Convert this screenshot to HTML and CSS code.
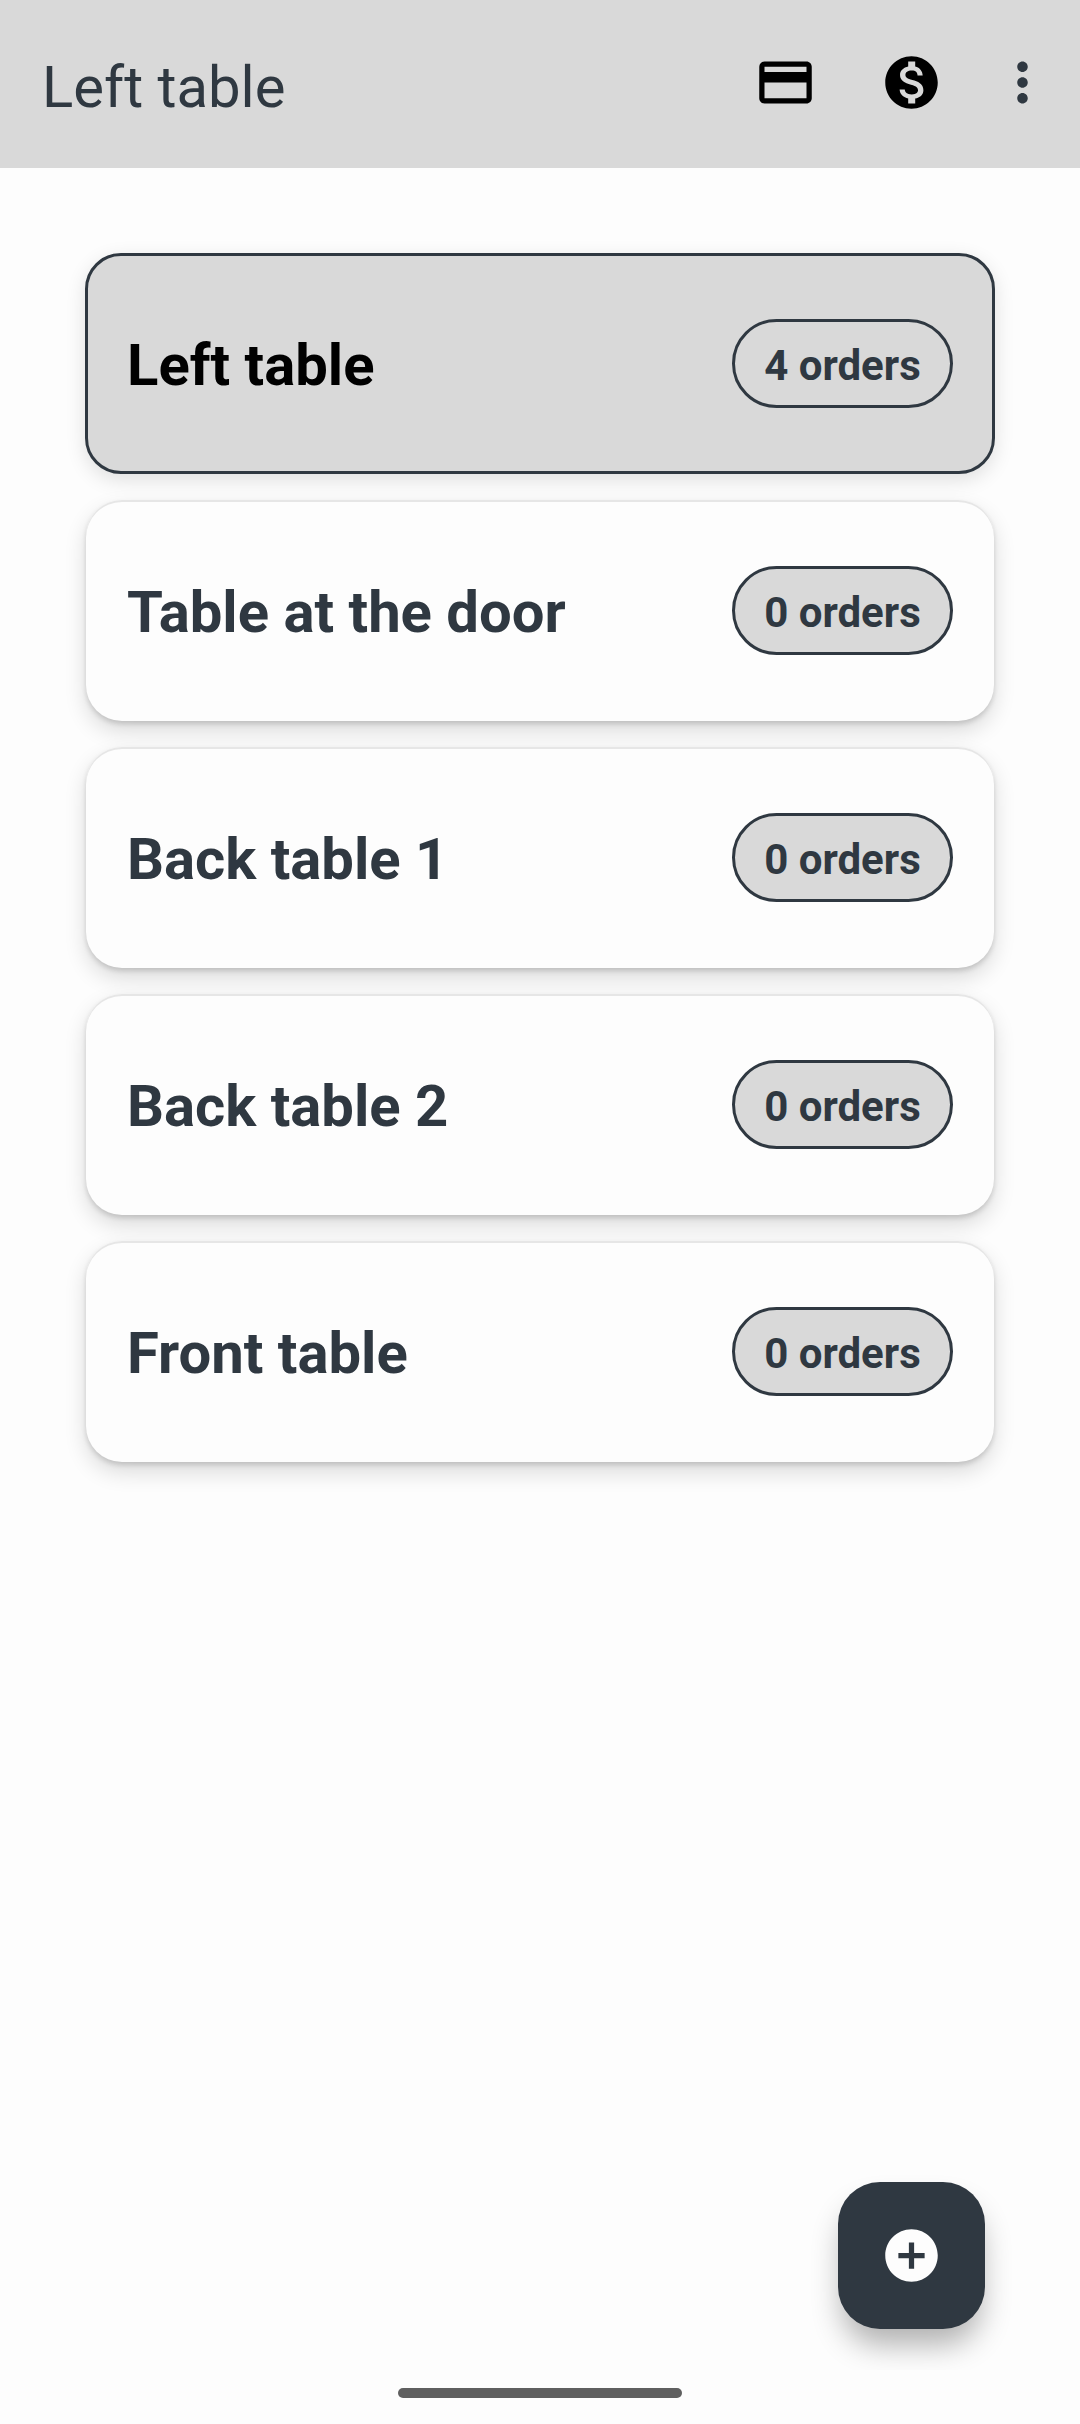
FILE: index.html
```html
<!DOCTYPE html>
<html lang="en">

<head>
    <meta charset="UTF-8">
    <meta name="viewport" content="width=device-width, initial-scale=1.0">
    <title>Left table</title>
    <link rel="stylesheet" href="styles.css">
</head>

<body>
    <header class="app-bar">
        <h1 class="app-title">Left table</h1>
        <div class="app-actions">
            <svg class="icon icon-black" viewBox="0 0 24 24"><path d="M20 4H4c-1.11 0-1.99.89-1.99 2L2 18c0 1.11.89 2 2 2h16c1.11 0 2-.89 2-2V6c0-1.11-.89-2-2-2zm0 14H4v-6h16v6zm0-10H4V6h16v2z"/></svg>
            <svg class="icon icon-black" viewBox="0 0 24 24"><path d="M12 2C6.48 2 2 6.48 2 12s4.48 10 10 10 10-4.48 10-10S17.52 2 12 2zm1.41 16.09V20h-2.67v-1.93c-1.71-.36-3.16-1.46-3.27-3.4h1.96c.1 1.05.82 1.87 2.65 1.87 1.96 0 2.4-.98 2.4-1.59 0-.83-.44-1.61-2.67-2.14-2.48-.6-4.18-1.62-4.18-3.67 0-1.72 1.39-2.84 3.11-3.21V4h2.67v1.95c1.86.45 2.79 1.86 2.85 3.39H14.3c-.05-1.11-.64-1.87-2.22-1.87-1.5 0-2.4.68-2.4 1.64 0 .84.65 1.39 2.67 1.91s4.18 1.39 4.18 3.91c-.01 1.83-1.38 2.83-3.12 3.16z"/></svg>
            <svg class="icon icon-slate" viewBox="0 0 24 24"><path d="M12 8c1.1 0 2-.9 2-2s-.9-2-2-2-2 .9-2 2 .9 2 2 2zm0 2c-1.1 0-2 .9-2 2s.9 2 2 2 2-.9 2-2-.9-2-2-2zm0 6c-1.1 0-2 .9-2 2s.9 2 2 2 2-.9 2-2-.9-2-2-2z"/></svg>
        </div>
    </header>

    <main class="content">
        <ul class="table-list">
            <li class="table-card selected">
                <span class="table-name">Left table</span>
                <span class="order-pill">4 orders</span>
            </li>
            <li class="table-card">
                <span class="table-name">Table at the door</span>
                <span class="order-pill">0 orders</span>
            </li>
            <li class="table-card">
                <span class="table-name">Back table 1</span>
                <span class="order-pill">0 orders</span>
            </li>
            <li class="table-card">
                <span class="table-name">Back table 2</span>
                <span class="order-pill">0 orders</span>
            </li>
            <li class="table-card">
                <span class="table-name">Front table</span>
                <span class="order-pill">0 orders</span>
            </li>
        </ul>

        <button class="fab" aria-label="Add table">
            <svg class="icon icon-white" viewBox="0 0 24 24"><path d="M12 2C6.48 2 2 6.48 2 12s4.48 10 10 10 10-4.48 10-10S17.52 2 12 2zm5 11h-4v4h-2v-4H7v-2h4V7h2v4h4v2z"/></svg>
        </button>
    </main>

    <footer class="nav-bar">
        <div class="home-indicator"></div>
    </footer>
</body>

</html>
```

FILE: styles.css
```css
* {
    box-sizing: border-box;
}

body {
    margin: 0;
    height: 2424px;
    display: flex;
    flex-direction: column;
    overflow: hidden;
    background-color: #fdfdfd;
    color: #2f3841;
    font-family: Roboto, sans-serif;
}

.app-bar {
    height: 168px;
    flex: none;
    display: flex;
    align-items: center;
    justify-content: space-between;
    padding: 0 26px 0 42px;
    background-color: #d9d9d9;
}

.app-title {
    margin: 6px 0 0;
    font-size: 58px;
    font-weight: 400;
    line-height: 1;
}

.app-actions {
    display: flex;
    align-items: center;
    gap: 63px;
    margin-bottom: 3px;
}

.icon {
    width: 63px;
    height: 63px;
    display: block;
}

.app-actions .icon:last-child {
    margin-left: -15px;
}

.icon-black {
    fill: #000;
}

.icon-slate {
    fill: #2f3841;
}

.icon-white {
    fill: #fdfdfd;
}

.content {
    flex: 1;
    position: relative;
}

.table-list {
    list-style: none;
    margin: 0;
    padding: 85px 85px 0;
    display: flex;
    flex-direction: column;
    gap: 26px;
}

.table-card {
    height: 221px;
    margin: 0 1px;
    display: flex;
    align-items: center;
    justify-content: space-between;
    padding: 0 41px;
    border-radius: 36px;
    background-color: #fdfdfd;
    box-shadow: inset 0 2px 0 #e6e6e6, 0 3px 5px rgba(0, 0, 0, 0.14), 0 10px 22px rgba(0, 0, 0, 0.14);
}

.table-card.selected {
    margin: 0;
    padding: 0 39px;
    background-color: #d9d9d9;
    border: 3px solid #2f3841;
    box-shadow: 0 6px 20px rgba(0, 0, 0, 0.12);
}

.table-name {
    margin-top: 2px;
    font-size: 58px;
    font-weight: 700;
}

.selected .table-name {
    color: #000;
}

.order-pill {
    width: 221px;
    height: 89px;
    display: flex;
    align-items: center;
    justify-content: center;
    padding-top: 3px;
    border: 3px solid #2f3841;
    border-radius: 45px;
    background-color: #d9d9d9;
    font-size: 42px;
    font-weight: 700;
}

.fab {
    position: absolute;
    right: 95px;
    bottom: 41px;
    width: 147px;
    height: 147px;
    display: flex;
    align-items: center;
    justify-content: center;
    padding: 0;
    border: none;
    border-radius: 42px;
    background-color: #2f3841;
    box-shadow: 0 20px 30px -4px rgba(0, 0, 0, 0.3);
}

.nav-bar {
    height: 54px;
    flex: none;
    position: relative;
    display: flex;
    justify-content: center;
    padding-top: 18px;
    background-color: #fdfdfd;
}

.home-indicator {
    width: 284px;
    height: 10px;
    border-radius: 5px;
    background-color: #5f5f5f;
}
```
